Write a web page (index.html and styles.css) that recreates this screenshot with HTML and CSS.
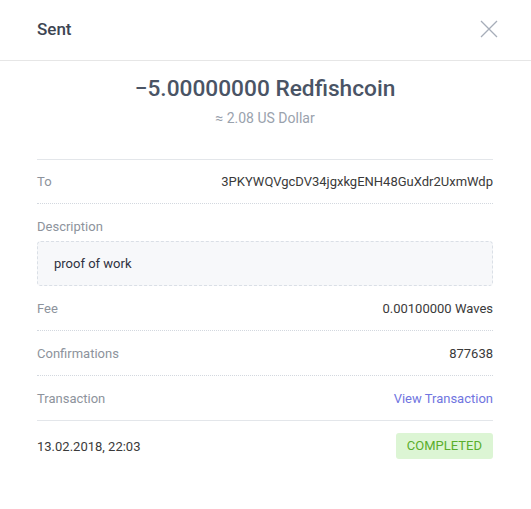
FILE: index.html
```html
<!DOCTYPE html>
<html>
	<head>
		<meta charset="UTF-8">
		<title>Sent</title>
		<link rel="stylesheet" href="styles.css">
	</head>
	<body>
		<div class="modal">
			<div class="modal-header">
				<span class="modal-title">Sent</span>
				<svg class="close" width="18" height="18" viewBox="0 0 18 18">
					<path d="M1 1 L17 17 M17 1 L1 17" stroke="#a6adb9" stroke-width="1.3" fill="none"/>
				</svg>
			</div>
			<div class="modal-body">
				<div class="amount">
					<div class="amount-value">&minus;5.00000000 Redfishcoin</div>
					<div class="amount-fiat">&asymp; 2.08 US Dollar</div>
				</div>
				<div class="details">
					<div class="row row-first">
						<span class="label">To</span>
						<span class="value">3PKYWQVgcDV34jgxkgENH48GuXdr2UxmWdp</span>
					</div>
					<div class="row row-desc">
						<span class="label">Description</span>
					</div>
					<div class="desc-box">proof of work</div>
					<div class="row">
						<span class="label">Fee</span>
						<span class="value">0.00100000 Waves</span>
					</div>
					<div class="row">
						<span class="label">Confirmations</span>
						<span class="value">877638</span>
					</div>
					<div class="row row-last">
						<span class="label">Transaction</span>
						<a class="link" href="#">View Transaction</a>
					</div>
				</div>
				<div class="footer">
					<span class="date">13.02.2018, 22:03</span>
					<span class="badge">COMPLETED</span>
				</div>
			</div>
		</div>
	</body>
</html>
```

FILE: styles.css
```css
* {
	margin: 0;
	padding: 0;
	box-sizing: border-box;
}

body {
	background: #fff;
	font-family: Roboto, "Liberation Sans", sans-serif;
	color: #4a4a4a;
}

.modal {
	width: 531px;
}

.modal-header {
	height: 61px;
	border-bottom: 1px solid #e6e6e6;
	display: flex;
	align-items: center;
	justify-content: space-between;
	padding: 0 33px 3px 37px;
}

.modal-title {
	font-size: 17px;
	font-weight: 500;
	color: #3d4552;
}

.modal-body {
	padding: 0 38px 0 37px;
}

.amount {
	text-align: center;
	height: 99px;
	padding-top: 13px;
	border-bottom: 1px solid #e3e6ea;
}

.amount-value {
	font-size: 22.7px;
	font-weight: 500;
	color: #4a5465;
	line-height: 30px;
}

.amount-fiat {
	font-size: 14px;
	color: #9aa2ad;
	margin-top: 4px;
	line-height: 20px;
}

.row {
	height: 45px;
	display: flex;
	align-items: center;
	justify-content: space-between;
	font-size: 13px;
	border-bottom: 1px dotted #d3d8df;
}

.row-first {
	height: 44px;
}

.row-desc {
	height: 37px;
	border-bottom: none;
	padding-top: 8px;
}

.row-last {
	border-bottom: 1px solid #e3e6ea;
}

.label {
	color: #8d939c;
}

.value {
	color: #3a3a3a;
}

.link {
	color: #7075e0;
	text-decoration: none;
}

.desc-box {
	height: 45px;
	background: #f7f8fa;
	border: 1px dashed #dadfe6;
	border-radius: 4px;
	display: flex;
	align-items: center;
	padding-left: 16px;
	font-size: 13px;
	color: #2f3140;
}

.footer {
	height: 50px;
	display: flex;
	align-items: center;
	justify-content: space-between;
}

.date {
	font-size: 13px;
	color: #3a3a3a;
}

.badge {
	background: #dcf5d4;
	color: #5aae2c;
	font-size: 13px;
	padding: 0 11px;
	height: 26px;
	line-height: 26px;
	border-radius: 3px;
}
```
